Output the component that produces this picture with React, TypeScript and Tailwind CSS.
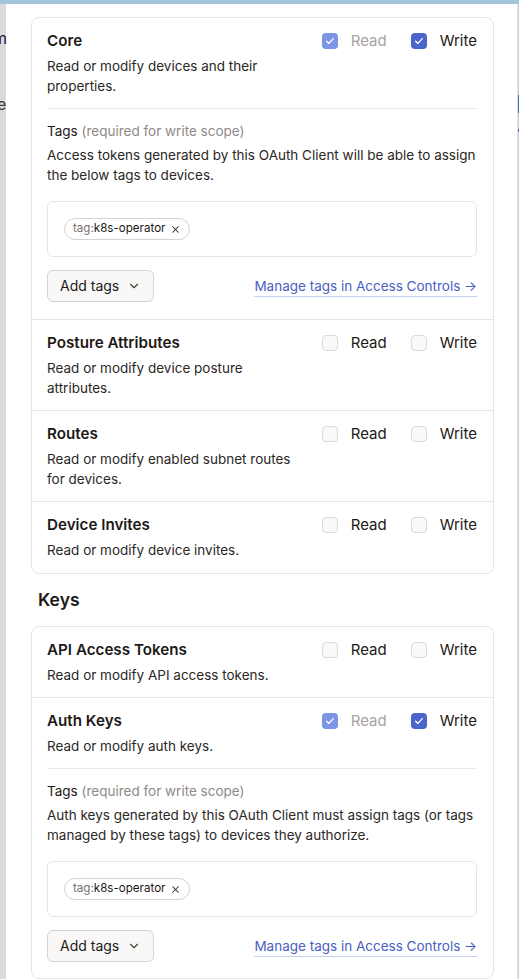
import React from "react";
import { ChevronDown, X } from "lucide-react";

type Scope = {
  title: string;
  description: string;
  read: "on" | "off" | "locked";
  write: boolean;
};

const Box: React.FC<{ state: "on" | "off" | "locked" }> = ({ state }) => {
  if (state === "off") {
    return <span className="h-4 w-4 shrink-0 rounded-[4px] border border-[#dcd9d6] bg-[#faf9f8]" />;
  }
  return (
    <span
      className={`flex h-4 w-4 shrink-0 items-center justify-center rounded-[4px] ${
        state === "on" ? "bg-[#4a66cc]" : "bg-[#7c95e6]"
      }`}
    >
      <svg viewBox="0 0 16 16" className="h-3 w-3" fill="none">
        <path d="M3.5 8.2l3 3 6-6.4" stroke="white" strokeWidth="1.8" strokeLinecap="round" strokeLinejoin="round" />
      </svg>
    </span>
  );
};

const Permission: React.FC<{ label: string; state: "on" | "off" | "locked" }> = ({ label, state }) => (
  <label className="flex items-center gap-[13px]">
    <Box state={state} />
    <span className={`text-[15px] ${state === "locked" ? "text-[#a8a29e]" : "text-[#1c1917]"}`}>{label}</span>
  </label>
);

const ScopeRow: React.FC<{ scope: Scope }> = ({ scope }) => (
  <div className="flex items-start gap-6">
    <div className="min-w-0 flex-1">
      <div className="text-[15.2px] font-semibold leading-[22px] text-[#1c1917]">{scope.title}</div>
      <p className="mt-1 text-[13.5px] leading-5 text-[#2b2725]">{scope.description}</p>
    </div>
    <div className="flex h-[22px] items-center gap-6">
      <Permission label="Read" state={scope.read} />
      <Permission label="Write" state={scope.write ? "on" : "off"} />
    </div>
  </div>
);

const TagsPicker: React.FC<{ help: string }> = ({ help }) => (
  <div>
    <div className="mt-3 border-t border-[#ebe9e7]" />
    <div className="mt-3 text-[13.5px] leading-5 text-[#1c1917]">
      Tags <span className="text-[#8f8a86]">(required for write scope)</span>
    </div>
    <p className="mt-1 text-[13.5px] leading-5 text-[#2b2725]">{help}</p>
    <div className="mt-4 flex rounded-md border border-[#e7e5e4] p-4">
      <span className="flex h-[22px] items-center rounded-full border border-[#d6d3d1] bg-white pl-2 pr-[8px] text-[11.6px]">
        <span className="text-[#78716c]">tag:</span>
        <span className="text-[#1c1917]">k8s-operator</span>
        <X size={11} strokeWidth={2.2} className="ml-[5px] text-[#292524]" />
      </span>
    </div>
    <div className="mt-[13px] flex items-center justify-between">
      <button className="flex h-8 items-center gap-2 rounded-md border border-[#d6d3d1] bg-[#f9f8f7] px-3 text-sm text-[#1c1917]">
        Add tags
        <ChevronDown size={14} strokeWidth={2} className="text-[#44403c]" />
      </button>
      <a className="text-[13.5px] text-[#4a60c2] underline decoration-[#c3cff5] underline-offset-[5px]">
        Manage tags in Access Controls →
      </a>
    </div>
  </div>
);

const devices: Scope[] = [
  { title: "Posture Attributes", description: "Read or modify device posture attributes.", read: "off", write: false },
  { title: "Routes", description: "Read or modify enabled subnet routes for devices.", read: "off", write: false },
];

export default function App() {
  return (
    <div className="relative h-[979px] w-[519px] overflow-hidden bg-white font-['Inter',sans-serif]">
      <div className="h-1 bg-[#a2c5da]" />
      <div className="flex h-full">
        <div className="w-[6px] shrink-0 bg-[#dadada]" />
        <div className="w-[511px] shrink-0 pl-[25px] pr-[23px] pt-[13px]">
          <div className="rounded-lg border border-[#e7e5e4]">
            <div className="pb-[17px] pl-[15px] pr-4 pt-3">
              <ScopeRow
                scope={{
                  title: "Core",
                  description: "Read or modify devices and their properties.",
                  read: "locked",
                  write: true,
                }}
              />
              <TagsPicker help="Access tokens generated by this OAuth Client will be able to assign the below tags to devices." />
            </div>
            {devices.map((s) => (
              <div key={s.title} className="border-t border-[#e7e5e4] py-3 pl-[15px] pr-4">
                <ScopeRow scope={s} />
              </div>
            ))}
            <div className="border-t border-[#e7e5e4] pb-[13px] pl-[15px] pr-4 pt-3">
              <ScopeRow
                scope={{
                  title: "Device Invites",
                  description: "Read or modify device invites.",
                  read: "off",
                  write: false,
                }}
              />
            </div>
          </div>

          <h3 className="mt-3 pl-[7px] text-[17.5px] font-semibold leading-7 text-[#1c1917]">Keys</h3>

          <div className="mt-3 rounded-lg border border-[#e7e5e4]">
            <div className="py-3 pl-[15px] pr-4">
              <ScopeRow
                scope={{
                  title: "API Access Tokens",
                  description: "Read or modify API access tokens.",
                  read: "off",
                  write: false,
                }}
              />
            </div>
            <div className="border-t border-[#e7e5e4] pb-4 pl-[15px] pr-4 pt-3">
              <ScopeRow
                scope={{
                  title: "Auth Keys",
                  description: "Read or modify auth keys.",
                  read: "locked",
                  write: true,
                }}
              />
              <TagsPicker help="Auth keys generated by this OAuth Client must assign tags (or tags managed by these tags) to devices they authorize." />
            </div>
          </div>
        </div>
        <div className="w-px shrink-0 bg-[#e3e3e3]" />
        <div className="w-px shrink-0 bg-[#cfcfcf]" />
      </div>

      {/* bits of the page behind the dialog */}
      <span className="absolute left-[-7px] top-[26px] text-base text-[#1c1917]">m</span>
      <span className="absolute left-[-3px] top-[92px] text-base text-[#3a3a3a]">e</span>
      <div className="absolute right-0 top-[95px] h-[18px] w-px bg-[#4a66cc]" />
      <div className="absolute right-0 top-[129px] h-[3px] w-px bg-[#4a66cc]" />
    </div>
  );
}
